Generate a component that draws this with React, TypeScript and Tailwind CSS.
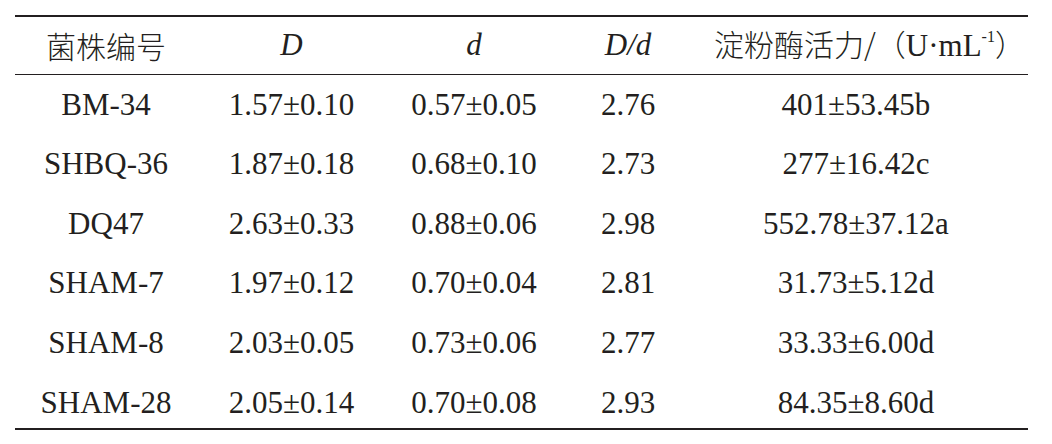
const rows = [
  ['BM-34', '1.57±0.10', '0.57±0.05', '2.76', '401±53.45b'],
  ['SHBQ-36', '1.87±0.18', '0.68±0.10', '2.73', '277±16.42c'],
  ['DQ47', '2.63±0.33', '0.88±0.06', '2.98', '552.78±37.12a'],
  ['SHAM-7', '1.97±0.12', '0.70±0.04', '2.81', '31.73±5.12d'],
  ['SHAM-8', '2.03±0.05', '0.73±0.06', '2.77', '33.33±6.00d'],
  ['SHAM-28', '2.05±0.14', '0.70±0.08', '2.93', '84.35±8.60d'],
]

const cols = ['w-[182px]', 'w-[189px]', 'w-[176px]', 'w-[132px]', 'w-[324px]']

export default function App() {
  return (
    <main className="w-[1052px] h-[444px] bg-white text-[#231f20] font-['Liberation_Serif',serif] pt-[15px] pl-[15px]">
      <div className="w-[1013px] border-t-2 border-b-2 border-[#231f20]">
        <div className="flex h-[58px] items-center border-b border-[#231f20] text-[31px]">
          <div className={`${cols[0]} text-center font-['Noto_Sans_CJK_SC',sans-serif] font-light text-[30px]`}>菌株编号</div>
          <div className={`${cols[1]} text-center italic`}>D</div>
          <div className={`${cols[2]} text-center italic`}>d</div>
          <div className={`${cols[3]} text-center italic`}>D/d</div>
          <div className={`${cols[4]} text-center whitespace-nowrap pl-[20px]`}>
            <span className="font-['Noto_Sans_CJK_SC',sans-serif] font-light text-[30px]">淀粉酶活力/（</span>
            U·mL<sup className="text-[16px] -top-[0.9em]">-1</sup>
            <span className="font-['Noto_Sans_CJK_SC',sans-serif] font-light text-[30px]">）</span>
          </div>
        </div>
        <div className="flex flex-col h-[353px]">
          {rows.map((r) => (
            <div key={r[0]} className="flex h-[59.6px] shrink-0 items-center text-[31px]">
              {r.map((c, i) => (
                <div key={i} className={`${cols[i]} text-center`}>{c}</div>
              ))}
            </div>
          ))}
        </div>
      </div>
    </main>
  )
}
